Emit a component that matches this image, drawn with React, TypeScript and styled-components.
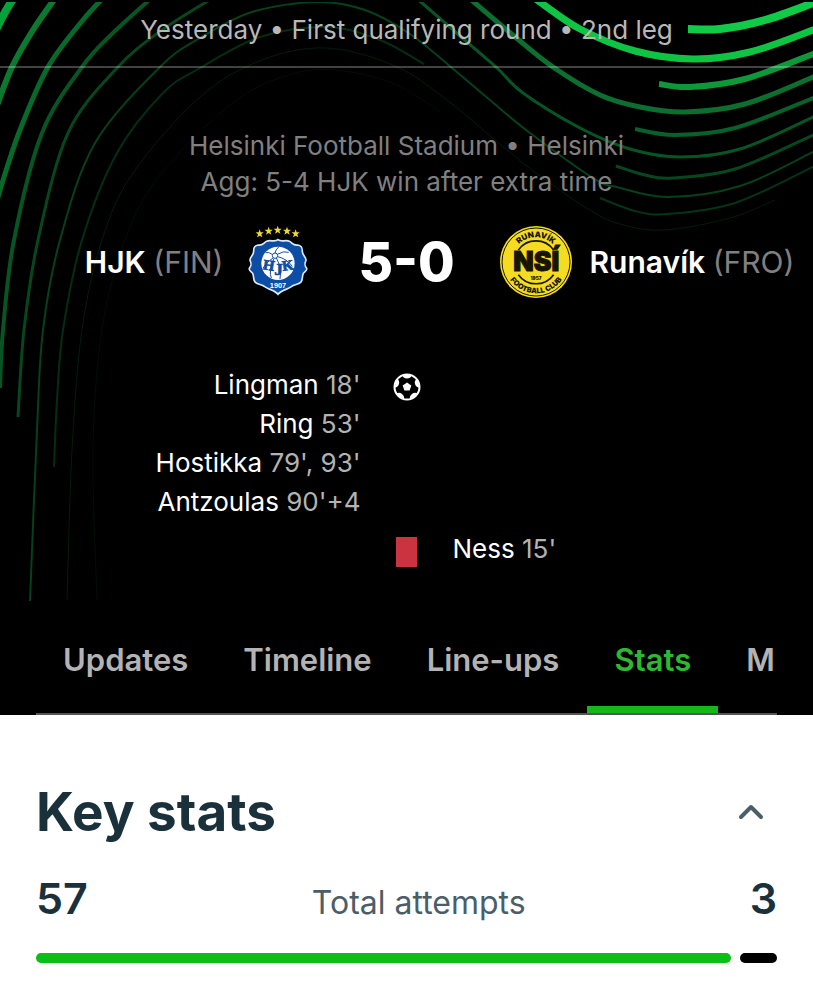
import React, { useState } from 'react';
import styled, { createGlobalStyle } from 'styled-components';

const GlobalStyle = createGlobalStyle`
  *, *::before, *::after { box-sizing: border-box; }
  body {
    margin: 0;
    background: #fff;
    color: #1a313c;
    font-family: Inter, "Liberation Sans", sans-serif;
  }
  h1, h2, p, ul { margin: 0; padding: 0; }
  ul { list-style: none; }
  button { font: inherit; color: inherit; background: none; border: 0; padding: 0; cursor: pointer; }
`;

const Hero = styled.header`
  position: relative;
  overflow: hidden;
  background: #000;
  color: #fff;
`;

const Waves = styled.svg`
  position: absolute;
  inset: 0;
  width: 100%;
  height: 100%;
`;

const HeroContent = styled.div`
  position: relative;
`;

const RoundBar = styled.p`
  padding: 12px 16px 18px;
  border-bottom: 2px solid rgba(255, 255, 255, 0.26);
  color: #b8b8b8;
  font-size: 26px;
  line-height: 36px;
  text-align: center;
  white-space: nowrap;
`;

const Venue = styled.div`
  padding-top: 60px;
  color: #808080;
  font-size: 26px;
  line-height: 36px;
  text-align: center;
  white-space: nowrap;
`;

const ScoreRow = styled.div`
  display: grid;
  grid-template-columns: minmax(0, 1fr) 186px minmax(0, 1fr);
  align-items: center;
  margin-top: 21px;
  height: 82px;
`;

const Team = styled.div<{ $side: 'home' | 'away' }>`
  display: flex;
  flex-direction: ${(p) => (p.$side === 'home' ? 'row' : 'row-reverse')};
  justify-content: flex-end;
  align-items: center;
  gap: 18px;
  font-size: 30px;
  font-weight: 600;
  line-height: 36px;
  white-space: nowrap;
`;

const Country = styled.span`
  color: #808080;
  font-weight: 400;
`;

const Crest = styled.svg`
  flex: none;
  width: 72px;
  height: 72px;
`;

const Score = styled.h1`
  font-size: 53px;
  font-weight: 800;
  line-height: 64px;
  text-align: center;
`;

const Events = styled.div`
  display: grid;
  gap: 8px;
  padding: 62px 0 51px;
`;

const EventRow = styled.div`
  display: grid;
  grid-template-columns: minmax(0, 1fr) 92px minmax(0, 1fr);
  font-size: 26px;
  line-height: 39px;
  white-space: nowrap;
`;

const EventList = styled.ul<{ $align: 'left' | 'right' }>`
  text-align: ${(p) => p.$align};
`;

const Minute = styled.span`
  color: #b3b3b3;
`;

const EventIcon = styled.div`
  display: flex;
  justify-content: center;
  padding-top: 8px;
`;

const RedCard = styled.span`
  width: 21px;
  height: 30px;
  background: #cb3340;
`;

const Tabs = styled.nav`
  display: flex;
  gap: 1px;
  margin: 0 36px;
  height: 96px;
  overflow: hidden;
  border-bottom: 2px solid #555;
`;

const Tab = styled.button<{ $active?: boolean }>`
  flex: none;
  padding: 0 27px 6px;
  border-bottom: 7px solid ${(p) => (p.$active ? '#12b919' : 'transparent')};
  color: ${(p) => (p.$active ? '#2fb82f' : '#b3b3b3')};
  font-size: 31px;
  font-weight: 600;
  line-height: 36px;

  &:last-child {
    padding-right: 0;
  }
`;

const Stats = styled.main`
  padding: 64px 36px 36px;
`;

const SectionHeader = styled.div`
  display: flex;
  align-items: center;
  justify-content: space-between;
`;

const SectionTitle = styled.h2`
  font-size: 53px;
  font-weight: 700;
  line-height: 66px;
`;

const Toggle = styled.button`
  display: flex;
  align-items: center;
  justify-content: center;
  width: 52px;
  height: 52px;
`;

const StatValues = styled.div`
  display: flex;
  align-items: baseline;
  justify-content: space-between;
  margin-top: 25px;
  line-height: 56px;
`;

const StatValue = styled.span`
  font-size: 43px;
  font-weight: 600;
`;

const StatLabel = styled.span`
  color: #4b5e68;
  font-size: 32px;
`;

const StatBar = styled.div`
  display: flex;
  gap: 9px;
  margin-top: 22px;
`;

const Segment = styled.span<{ $share: number; $color: string }>`
  flex: ${(p) => p.$share} 0 0;
  height: 10px;
  border-radius: 5px;
  background: ${(p) => p.$color};
`;

type Point = [number, number];
type Wave = { width: number; color: string; points: Point[] };

const waves: Wave[] = [
  { width: 8, color: '#07a13a', points: [[16, -6], [4, 14], [-6, 34]] },
  { width: 6, color: '#0b7a30', points: [[58, -6], [33, 30], [12, 67], [-4, 108]] },
  { width: 5, color: '#086a2a', points: [[107, -6], [83, 20], [48, 67], [20, 130], [0, 190], [-4, 208]] },
  { width: 4, color: '#075524', points: [[156, -6], [114, 32], [82, 67], [42, 133], [14, 240], [3, 330], [0, 388]] },
  { width: 3, color: '#06471f', points: [[216, -4], [162, 30], [117, 68], [68, 133], [38, 240], [24, 330], [18, 417]] },
  {
    width: 2,
    color: '#06401c',
    points: [
      [30, 601], [37, 430], [43, 330], [60, 240], [95, 143], [160, 67], [200, 38], [252, 12], [317, 2], [365, 10],
      [410, 34], [452, 68], [491, 101], [530, 133], [593, 178], [617, 187], [668, 197], [740, 186], [813, 152], [830, 143],
    ],
  },
  {
    width: 2,
    color: '#042e14',
    points: [[54, 467], [57, 400], [63, 330], [82, 240], [117, 153], [163, 93], [200, 68], [260, 37], [327, 27], [380, 40], [424, 64]],
  },
  {
    width: 1,
    color: '#021d0c',
    points: [
      [67, 600], [72, 450], [82, 330], [102, 240], [133, 173], [200, 97], [262, 60], [327, 48], [395, 66], [447, 100],
      [523, 163], [585, 207], [620, 224], [665, 230], [730, 218], [775, 200],
    ],
  },
  { width: 1, color: '#010f06', points: [[97, 600], [93, 450], [102, 330], [125, 240], [160, 175], [230, 105], [285, 76], [335, 70], [395, 84], [440, 112]] },
  { width: 3, color: '#075525', points: [[412, -5], [422, 3], [460, 36], [497, 68], [523, 93], [580, 128], [630, 149], [680, 157], [740, 149], [813, 117], [830, 108]] },
  { width: 5, color: '#0c6f2f', points: [[466, -5], [475, 3], [514, 36], [553, 67], [600, 95], [640, 107], [685, 112], [745, 104], [813, 77], [830, 69]] },
  { width: 7, color: '#0fc443', points: [[526, -8], [540, 2], [580, 29], [635, 51], [693, 59], [750, 52], [813, 30], [830, 22]] },
  { width: 8, color: '#10cb47', points: [[688, 29], [720, 29], [765, 20], [813, 3], [830, -4]] },
  { width: 6, color: '#0d9939', points: [[659, 84], [690, 87], [745, 79], [813, 54], [830, 46]] },
  { width: 4, color: '#08602a', points: [[635, 129], [675, 135], [735, 128], [813, 98], [830, 90]] },
  { width: 3, color: '#064720', points: [[616, 166], [645, 175], [672, 178], [735, 169], [813, 135], [830, 127]] },
  { width: 2, color: '#043317', points: [[600, 198], [635, 211], [668, 214], [735, 203], [813, 167], [830, 159]] },
];

/** Smooth cubic path through a list of points. */
const smoothPath = (pts: Point[]) =>
  pts.slice(1).reduce((d, p, i) => {
    const prev = pts[i];
    const before = pts[i - 1] ?? prev;
    const after = pts[i + 2] ?? p;
    const c1 = [prev[0] + (p[0] - before[0]) / 6, prev[1] + (p[1] - before[1]) / 6];
    const c2 = [p[0] - (after[0] - prev[0]) / 6, p[1] - (after[1] - prev[1]) / 6];
    return `${d} C${c1.join(' ')} ${c2.join(' ')} ${p.join(' ')}`;
  }, `M${pts[0].join(' ')}`);

const star = 'M0 -13 L3 -4 L12 -4 L5 2 L8 11 L0 6 L-8 11 L-5 2 L-12 -4 L-3 -4 Z';
const stars = [[73, 57], [100, 49], [127, 46], [155, 49], [181, 57]];

const HjkCrest = () => (
  <Crest viewBox="20 34 216 216" overflow="visible" role="img" aria-label="HJK crest">
    {stars.map(([x, y]) => (
      <path key={x} d={star} transform={`translate(${x} ${y})`} fill="#f0d832" />
    ))}
    <path
      d="M128 75 C138 84 151 74 162 80 C171 84 173 93 187 91 C202 93 201 103 201 111 C202 123 213 127 212 137 C205 151 210 155 214 161 C217 166 208 171 204 176 C199 186 204 194 196 203 C188 211 176 208 168 216 C157 225 139 225 128 239 C117 225 99 225 88 216 C80 208 68 211 60 203 C52 194 57 186 52 176 C48 171 39 166 42 161 C46 155 51 151 44 137 C43 127 54 123 55 111 C55 103 54 93 69 91 C83 93 85 84 94 80 C105 74 118 84 128 75 Z"
      fill="#0c4da5"
      stroke="#dceaff"
      strokeWidth="5"
    />
    <circle cx="128" cy="146" r="50" fill="#fff" />
    <g fill="none" stroke="#174e9c" strokeWidth="3">
      <circle cx="119" cy="123" r="8" />
      <path d="M119 115 Q121 105 130 97 M112 120 Q99 110 91 114 M126 119 Q145 107 160 113 M113 130 Q96 140 83 160 M123 130 Q140 158 134 193 M127 126 Q154 132 171 155 M116 132 Q99 170 108 190" />
    </g>
    <g fill="#0c4da5" stroke="#0c4da5" strokeWidth="2" fontFamily="Liberation Serif, serif" fontWeight="700" textAnchor="middle">
      <text x="99" y="166" fontSize="44" transform="rotate(8 99 164)">H</text>
      <text x="130" y="182" fontSize="52">J</text>
      <text x="159" y="167" fontSize="44" transform="rotate(-8 158 166)">K</text>
    </g>
    <text x="128" y="219" fill="#fff" fontFamily="Liberation Sans, sans-serif" fontWeight="700" fontSize="22" textAnchor="middle">1907</text>
  </Crest>
);

const NsiCrest = () => (
  <Crest viewBox="28 31 216 216" role="img" aria-label="NSÍ Runavík crest">
    <defs>
      <path id="nsi-top" d="M62 139 A74 74 0 0 1 210 139" />
      <path id="nsi-bottom" d="M42 139 A94 94 0 0 0 230 139" />
    </defs>
    <circle cx="136" cy="139" r="108" fill="#f5dc20" />
    <circle cx="136" cy="139" r="102" fill="none" stroke="#171500" strokeWidth="3" />
    <g fill="none" stroke="#171500" strokeWidth="5">
      <path d="M83 103 A65 65 0 0 1 189 103" />
      <path d="M83 177 A65 65 0 0 0 189 177" />
    </g>
    <g fill="#171500" fontFamily="Inter, sans-serif" fontWeight="900" textAnchor="middle">
      <text fontSize="24">
        <textPath href="#nsi-top" startOffset="50%">RUNAVÍK</textPath>
      </text>
      <text fontSize="22">
        <textPath href="#nsi-bottom" startOffset="50%">FOOTBALL CLUB</textPath>
      </text>
      <text x="137" y="167" fontSize="80" stroke="#171500" strokeWidth="3">NSÍ</text>
      <text x="136" y="192" fontSize="14">1957</text>
    </g>
  </Crest>
);

const panels = [0, 72, 144, 216, 288];

const Ball = () => (
  <svg width="28" height="28" viewBox="0 0 28 28" role="img" aria-label="Goals">
    <circle cx="14" cy="14" r="12.5" fill="none" stroke="#fff" strokeWidth="2" />
    <path d="M14 9.5 L18.3 12.6 L16.6 17.6 H11.4 L9.7 12.6 Z" fill="#fff" />
    {panels.map((angle) => (
      <path key={angle} d="M9 2 H19 Q17.5 5.5 14 5.5 Q10.5 5.5 9 2 Z" fill="#fff" transform={`rotate(${angle} 14 14)`} />
    ))}
  </svg>
);

const goals = [
  { player: 'Lingman', minute: "18'" },
  { player: 'Ring', minute: "53'" },
  { player: 'Hostikka', minute: "79', 93'" },
  { player: 'Antzoulas', minute: "90'+4" },
];

const tabs = ['Updates', 'Timeline', 'Line-ups', 'Stats', 'M'];

export default function App() {
  const [active, setActive] = useState('Stats');
  const [open, setOpen] = useState(true);

  return (
    <>
      <GlobalStyle />
      <Hero>
        <Waves viewBox="0 0 813 715" preserveAspectRatio="xMidYMin slice" aria-hidden="true">
          {waves.map(({ points, width, color }) => (
            <path key={points.join()} d={smoothPath(points)} fill="none" stroke={color} strokeWidth={width} />
          ))}
          <rect width="813" height="2" fill="#000" />
        </Waves>
        <HeroContent>
          <RoundBar>Yesterday • First qualifying round • 2nd leg</RoundBar>
          <Venue>
            <p>Helsinki Football Stadium • Helsinki</p>
            <p>Agg: 5-4 HJK win after extra time</p>
          </Venue>
          <ScoreRow>
            <Team $side="home">
              <span>HJK <Country>(FIN)</Country></span>
              <HjkCrest />
            </Team>
            <Score>5-0</Score>
            <Team $side="away">
              <span>Runavík <Country>(FRO)</Country></span>
              <NsiCrest />
            </Team>
          </ScoreRow>
          <Events>
            <EventRow>
              <EventList $align="right">
                {goals.map((g) => (
                  <li key={g.player}>{g.player} <Minute>{g.minute}</Minute></li>
                ))}
              </EventList>
              <EventIcon><Ball /></EventIcon>
            </EventRow>
            <EventRow>
              <span />
              <EventIcon><RedCard role="img" aria-label="Red card" /></EventIcon>
              <EventList $align="left">
                <li>Ness <Minute>15'</Minute></li>
              </EventList>
            </EventRow>
          </Events>
          <Tabs>
            {tabs.map((t) => (
              <Tab key={t} $active={t === active} onClick={() => setActive(t)}>{t}</Tab>
            ))}
          </Tabs>
        </HeroContent>
      </Hero>
      <Stats>
        <SectionHeader>
          <SectionTitle>Key stats</SectionTitle>
          <Toggle aria-label="Toggle key stats" aria-expanded={open} onClick={() => setOpen(!open)}>
            <svg width="28" height="18" viewBox="0 0 28 18" fill="none" stroke="#4b5e68" strokeWidth="4" strokeLinecap="round" strokeLinejoin="round">
              <path d={open ? 'M4 14 L14 4 L24 14' : 'M4 4 L14 14 L24 4'} />
            </svg>
          </Toggle>
        </SectionHeader>
        {open && (
          <section>
            <StatValues>
              <StatValue>57</StatValue>
              <StatLabel>Total attempts</StatLabel>
              <StatValue>3</StatValue>
            </StatValues>
            <StatBar>
              <Segment $share={57} $color="#0dbd18" />
              <Segment $share={3} $color="#000" />
            </StatBar>
          </section>
        )}
      </Stats>
    </>
  );
}
